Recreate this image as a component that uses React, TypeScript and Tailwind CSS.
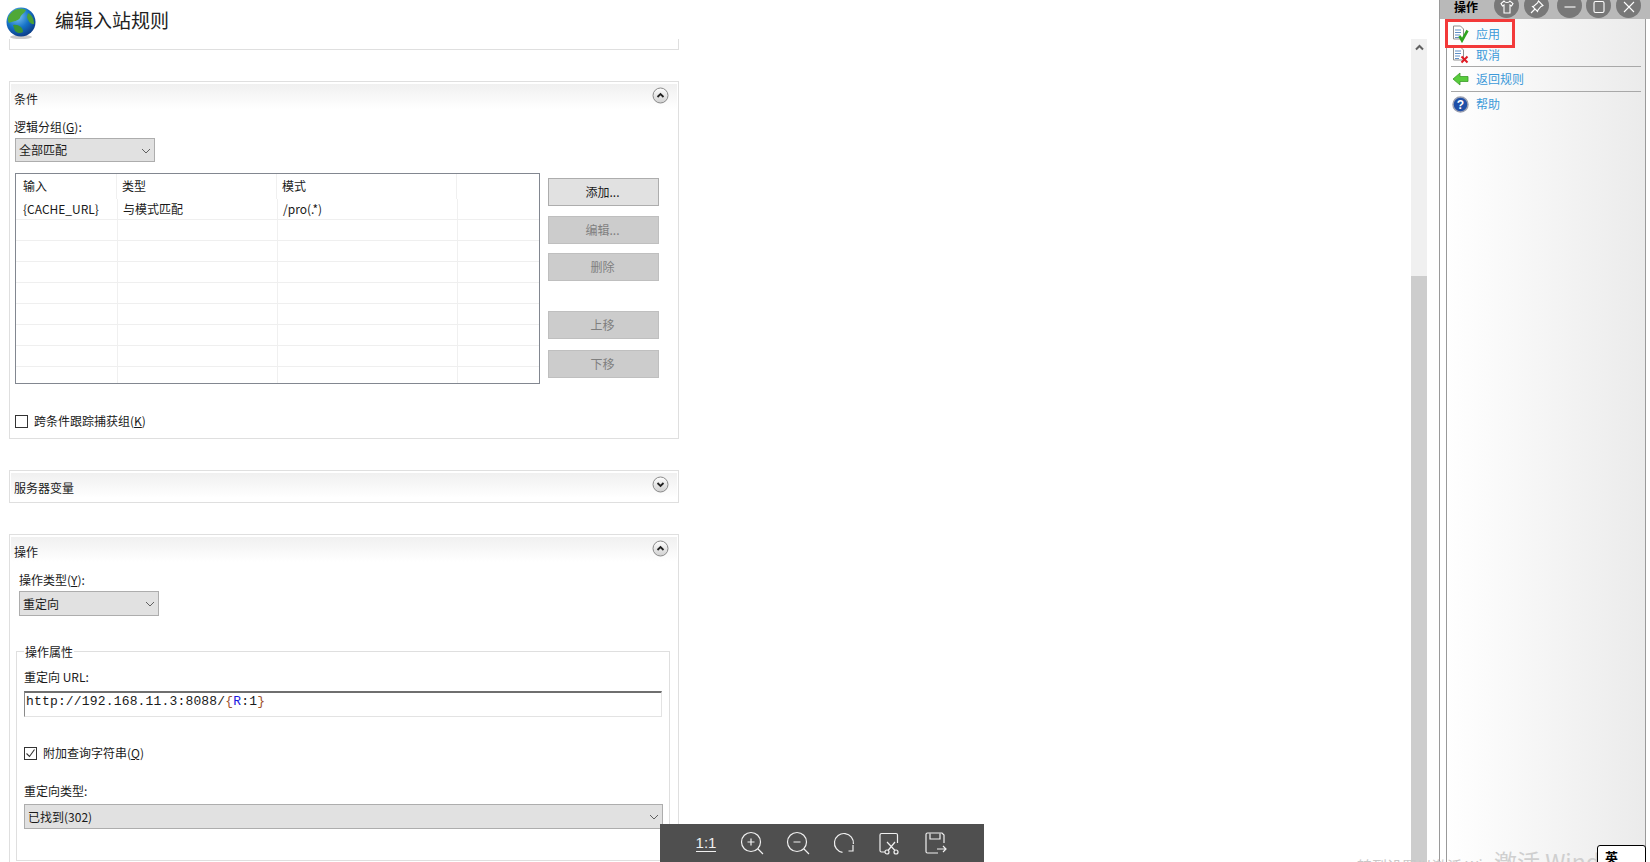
import React from "react";

const Chevron = ({ up }: { up?: boolean }) => (
  <svg width="17" height="17" viewBox="0 0 17 17" className="block">
    <defs>
      <linearGradient id={up ? "cu" : "cd"} x1="0" y1="0" x2="0" y2="1">
        <stop offset="0" stopColor="#ffffff" />
        <stop offset="1" stopColor="#d0d0d0" />
      </linearGradient>
    </defs>
    <circle cx="8.5" cy="8.5" r="7.5" fill={`url(#${up ? "cu" : "cd"})`} stroke="#8a8a8a" />
    <path d={up ? "M5.5 10 L8.5 7 L11.5 10" : "M5.5 7 L8.5 10 L11.5 7"} fill="none" stroke="#222" strokeWidth="1.8" />
  </svg>
);

const SelectBox = ({ text, className }: { text: string; className: string }) => (
  <div className={`flex items-center justify-between border border-[#adadad] bg-[#e1e1e1] pl-[3px] pr-[3px] text-[12px] leading-4 ${className}`}>
    <span>{text}</span>
    <svg width="10" height="6" viewBox="0 0 10 6" className="mt-[1px]"><path d="M1 1 L5 5 L9 1" fill="none" stroke="#606060" strokeWidth="1" /></svg>
  </div>
);

const Btn = ({ text, active, className = "" }: { text: string; active?: boolean; className?: string }) => (
  <div className={`flex h-[28px] w-[111px] items-center justify-center border pr-[2px] text-[12px] leading-4 ${active ? "border-[#adadad] bg-[#e1e1e1] text-[#1a1a1a]" : "border-[#bfbfbf] bg-[#cccccc] text-[#7f7f7f]"} ${className}`}>
    {text}
  </div>
);

const CardHead = ({ title, up }: { title: string; up?: boolean }) => (
  <div className="mx-[1px] mt-[2px] flex h-[25px] items-start justify-between bg-gradient-to-b from-[#f0f0f0] to-white pl-[3px] pr-[8px]">
    <span className="mt-[7px] text-[12px] leading-4">{title}</span>
    <span className="mt-[3px]"><Chevron up={up} /></span>
  </div>
);

const rows = [0, 1, 2, 3, 4, 5, 6, 7, 8];

const Cell = ({ w, text }: { w: string; text?: string }) => (
  <div className={`${w} border-r border-[#f0f0f0] text-[12px] leading-4`}>{text}</div>
);

const DocIcon = ({ kind }: { kind: "ok" | "no" }) => (
  <svg width="18" height="18" viewBox="0 0 18 18">
    <path d="M1.5 1 H8.5 L11.5 4 V14 H1.5 Z" fill="#fff" stroke="#8f8f8f" />
    <path d="M3 5 H9 M3 7.5 H9 M3 10 H8 M3 12.5 H7" stroke="#5f8fc7" strokeWidth="1" />
    {kind === "ok" ? (
      <path d="M7.5 11 L10 15.5 L15.5 5.5" fill="none" stroke="#2fa51f" strokeWidth="2.6" />
    ) : (
      <path d="M9.5 10.5 L15.5 16.5 M15.5 10.5 L9.5 16.5" stroke="#e01b24" strokeWidth="2" />
    )}
  </svg>
);

const Action = ({ icon, text, h }: { icon: React.ReactNode; text: string; h: string }) => (
  <div className={`flex items-center pl-[5px] ${h}`}>
    <span className="flex w-[24px] shrink-0 items-center">{icon}</span>
    <span className="text-[12px] leading-4 text-[#3c9ad9]">{text}</span>
  </div>
);

const Circle = ({ children, className }: { children: React.ReactNode; className: string }) => (
  <div className={`-mt-[7px] flex h-[25px] w-[25px] shrink-0 items-center justify-center rounded-full bg-[#787878] ${className}`}>
    <svg width="16" height="16" viewBox="0 0 16 16" fill="none" stroke="#fff" strokeWidth="1.1" className="mt-[2px]">{children}</svg>
  </div>
);

const Slot = ({ children }: { children: React.ReactNode }) => (
  <div className="flex w-[46px] shrink-0 items-center justify-center">{children}</div>
);

export default function App() {
  return (
    <div className="relative flex h-[862px] w-[1650px] overflow-hidden bg-white text-[#1a1a1a] [font-family:'Noto_Sans_CJK_SC','Liberation_Sans',sans-serif]">
      {/* main column */}
      <div className="w-[1411px] shrink-0">
        <div className="flex h-[39px] items-start">
          <svg width="32" height="33" viewBox="0 0 32 33" className="ml-[5px] mt-[7px] shrink-0">
            <defs>
              <radialGradient id="g1" cx="0.38" cy="0.3" r="0.8">
                <stop offset="0" stopColor="#7fc6f0" />
                <stop offset="0.5" stopColor="#1673c8" />
                <stop offset="1" stopColor="#082f78" />
              </radialGradient>
            </defs>
            <ellipse cx="16" cy="30" rx="11" ry="2" fill="#c9c9c9" />
            <circle cx="16" cy="15" r="14.5" fill="url(#g1)" />
            <path d="M6 6 C10 1 17 1 21 3 C19 7 16 7 15 11 C13 14 9 14 4 16 C2 12 3 9 6 6Z" fill="#4fa838" />
            <path d="M8 18 C13 17 18 20 18 25 C15 27 12 26 10 24 Z" fill="#3a9335" />
            <path d="M23 6 C27 8 29 12 29 17 C26 18 23 14 22 10 Z" fill="#4ba035" />
          </svg>
          <span className="ml-[18px] mt-[7px] text-[19px] leading-[26px] text-[#222]">编辑入站规则</span>
        </div>

        <div className="ml-[9px] w-[670px]">
          <div className="h-[11px] border-x border-b border-[#dfdfdf]" />

          {/* conditions */}
          <div className="mt-[31px] h-[358px] border border-[#dfdfdf]">
            <CardHead title="条件" up />
            <div className="pl-[4px]">
              <div className="mt-[10px] text-[12px] leading-4">逻辑分组(<u>G</u>):</div>
              <SelectBox text="全部匹配" className="ml-[1px] mt-[3px] h-[24px] w-[140px]" />
              <div className="ml-[1px] mt-[11px] flex items-start">
                <div className="h-[211px] w-[525px] border border-[#828790]">
                  <div className="flex h-[25px]">
                    <Cell w="w-[101px] pl-[7px] pt-[4px]" text="输入" />
                    <Cell w="w-[160px] pl-[5px] pt-[4px]" text="类型" />
                    <Cell w="w-[180px] pl-[5px] pt-[4px]" text="模式" />
                  </div>
                  {rows.map((r) => (
                    <div key={r} className={`flex ${r < 8 ? "h-[21px] border-b border-[#efefef]" : "h-[16px]"}`}>
                      <Cell w="w-[102px] pl-[7px] pt-[2px]" text={r === 0 ? "{CACHE_URL}" : ""} />
                      <Cell w="w-[160px] pl-[5px] pt-[2px]" text={r === 0 ? "与模式匹配" : ""} />
                      <Cell w="w-[180px] pl-[5px] pt-[2px]" text={r === 0 ? "/pro(.*)" : ""} />
                    </div>
                  ))}
                </div>
                <div className="ml-[8px] mt-[5px]">
                  <Btn text="添加..." active />
                  <Btn text="编辑..." className="mt-[10px]" />
                  <Btn text="删除" className="mt-[9px]" />
                  <Btn text="上移" className="mt-[30px]" />
                  <Btn text="下移" className="mt-[11px]" />
                </div>
              </div>
              <div className="ml-[1px] mt-[29px] flex items-center">
                <span className="h-[13px] w-[13px] border border-[#333]" />
                <span className="ml-[6px] text-[12px] leading-4">跨条件跟踪捕获组(<u>K</u>)</span>
              </div>
            </div>
          </div>

          {/* server variables */}
          <div className="mt-[31px] h-[33px] border border-[#dfdfdf]">
            <CardHead title="服务器变量" />
          </div>

          {/* action */}
          <div className="mt-[31px] border border-[#dfdfdf] pb-[20px]">
            <CardHead title="操作" up />
            <div className="pl-[9px]">
              <div className="mt-[10px] text-[12px] leading-4">操作类型(<u>Y</u>):</div>
              <SelectBox text="重定向" className="mt-[3px] h-[25px] w-[140px]" />
            </div>
            <div className="relative ml-[6px] mt-[35px] w-[654px] border border-[#dfdfdf] pb-[31px] pl-[7px] pt-[17px]">
              <span className="absolute -top-[8px] left-[7px] bg-white px-[1px] text-[12px] leading-4">操作属性</span>
              <div className="text-[12px] leading-4">重定向 URL:</div>
              <div className="mt-[6px] h-[26px] w-[638px] border-x border-b border-t-2 border-b-[#e3e3e3] border-l-[#8a8a8a] border-r-[#e3e3e3] border-t-[#6f6f6f] pl-[1px] pt-[1px] text-[13px] leading-[15px] tracking-[0.17px] [font-family:'Liberation_Mono',monospace]">
                http://192.168.11.3:8088/<span className="text-[#a0522d]">{"{"}</span><span className="text-[#1a1ae0]">R</span>:1<span className="text-[#a0522d]">{"}"}</span>
              </div>
              <div className="mt-[28px] flex items-center">
                <span className="flex h-[13px] w-[13px] items-center justify-center border border-[#333]">
                  <svg width="11" height="11" viewBox="0 0 11 11"><path d="M1.5 5.5 L4.5 8.5 L9.5 1.5" fill="none" stroke="#333" strokeWidth="1.1" /></svg>
                </span>
                <span className="ml-[6px] text-[12px] leading-4">附加查询字符串(<u>Q</u>)</span>
              </div>
              <div className="mt-[22px] text-[12px] leading-4">重定向类型:</div>
              <SelectBox text="已找到(302)" className="mt-[5px] h-[25px] w-[639px]" />
            </div>
          </div>
        </div>
      </div>

      {/* scrollbar */}
      <div className="mt-[39px] flex h-[823px] w-[16px] shrink-0 flex-col bg-[#f0f0f0]">
        <div className="flex h-[17px] items-center justify-center">
          <svg width="9" height="7" viewBox="0 0 9 7"><path d="M1 5.5 L4.5 2 L8 5.5" fill="none" stroke="#606060" strokeWidth="2" /></svg>
        </div>
        <div className="mt-[220px] flex-1 bg-[#cdcdcd]" />
      </div>

      {/* actions panel */}
      <div className="ml-[12px] flex w-[211px] shrink-0 flex-col border-l border-[#9a9a9a]">
        <div className="flex h-[19px] shrink-0 items-start overflow-hidden bg-[#b9b9b9]">
          <span className="ml-[14px] shrink-0 text-[12px] font-bold leading-[14px] text-black">操作</span>
          <Circle className="ml-[16px]">
            <path d="M5 2 L2 4.5 L3.5 7 L5 6 V14 H11 V6 L12.5 7 L14 4.5 L11 2 C10 4 6 4 5 2Z" />
          </Circle>
          <Circle className="ml-[5px]">
            <path d="M9.5 2 L14 6.5 L12 7.5 L9 11 L8.5 12.5 L3.5 7.5 L5 7 L8.5 4 Z M6 10 L2 14" />
          </Circle>
          <Circle className="ml-[8px]"><path d="M2.5 8 H13.5" /></Circle>
          <Circle className="ml-[4px]"><rect x="3" y="2.5" width="10" height="11" rx="1.5" /></Circle>
          <Circle className="ml-[5px]"><path d="M3 3 L13 13 M13 3 L3 13" /></Circle>
        </div>
        <div className="ml-[6px] mr-[4px] flex-1 border-x border-[#9a9a9a] bg-gradient-to-r from-white to-[#ebebeb] pt-[4px]">
          <Action h="h-[21px]" text="应用" icon={<DocIcon kind="ok" />} />
          <Action h="h-[21px]" text="取消" icon={<DocIcon kind="no" />} />
          <div className="ml-[4px] mr-[4px] mt-[1px] h-px bg-[#a8a8a8]" />
          <Action
            h="h-[24px]"
            text="返回规则"
            icon={
              <svg width="17" height="14" viewBox="0 0 17 14">
                <path d="M1 7 L8 1 V4.5 H16 V9.5 H8 V13 Z" fill="#58cc3c" stroke="#3a9a28" strokeWidth="0.8" />
              </svg>
            }
          />
          <div className="ml-[4px] mr-[4px] h-px bg-[#a8a8a8]" />
          <Action
            h="h-[24px]"
            text="帮助"
            icon={
              <svg width="17" height="17" viewBox="0 0 17 17">
                <circle cx="8.5" cy="8.5" r="7.5" fill="#1f4fa8" stroke="#9a9fb0" strokeWidth="1.5" />
                <text x="8.5" y="13" textAnchor="middle" fontSize="12" fontWeight="700" fill="#fff" fontFamily="Liberation Sans">?</text>
              </svg>
            }
          />
        </div>
      </div>

      {/* overlays */}
      <div className="absolute left-[1445px] top-[19px] h-[29px] w-[70px] border-[3px] border-[#f33a3a]" />

      <span className="absolute left-[1357px] top-[856px] whitespace-nowrap text-[15px] leading-5 text-[#c8c8c8]">转到设置以激活 Windows</span>
      <span className="absolute left-[1494px] top-[847px] whitespace-nowrap text-[23px] leading-7 text-[#cfcfcf]">激活 Windows。</span>

      <div className="absolute left-[1597px] top-[845px] h-[30px] w-[49px] rounded-[3px] border border-black bg-white pl-[7px] pt-[1px] text-[13px] font-bold leading-5 text-black">英</div>

      <div className="absolute left-[660px] top-[824px] flex h-[38px] w-[324px] items-center bg-[#4f4f4f] pl-[23px] text-[#f0f0f0]">
        <Slot>
          <span className="border-b border-[#f0f0f0] text-[15px] font-light leading-[17px] [font-family:'Liberation_Sans',sans-serif]">1:1</span>
        </Slot>
        <Slot>
          <svg width="26" height="26" viewBox="0 0 26 26" fill="none" stroke="#f0f0f0" strokeWidth="1.2">
            <circle cx="12" cy="12" r="9.5" /><path d="M19 19 L24 24 M8.5 12 H15.5 M12 8.5 V15.5" />
          </svg>
        </Slot>
        <Slot>
          <svg width="26" height="26" viewBox="0 0 26 26" fill="none" stroke="#f0f0f0" strokeWidth="1.2">
            <circle cx="12" cy="12" r="9.5" /><path d="M19 19 L24 24 M8.5 12 H15.5" />
          </svg>
        </Slot>
        <Slot>
          <svg width="24" height="24" viewBox="0 0 24 24" fill="none" stroke="#f0f0f0" strokeWidth="1.2">
            <path d="M10.5 21.4 A9.5 9.5 0 1 1 21.4 13" /><path d="M21 14 V20 H16.5" />
          </svg>
        </Slot>
        <Slot>
          <svg width="24" height="24" viewBox="0 0 24 24" fill="none" stroke="#f0f0f0" strokeWidth="1.2">
            <path d="M7 21 H3.5 A1.5 1.5 0 0 1 2 19.5 V4 A1.5 1.5 0 0 1 3.5 2.5 H18 A1.5 1.5 0 0 1 19.5 4 V12" />
            <path d="M9 11 L17 19.5 M17 11 L10 19.5" />
            <circle cx="9" cy="21" r="2" /><circle cx="18" cy="21" r="2" />
          </svg>
        </Slot>
        <Slot>
          <svg width="24" height="24" viewBox="0 0 24 24" fill="none" stroke="#f0f0f0" strokeWidth="1.2">
            <path d="M14 22 H3.5 A1.5 1.5 0 0 1 2 20.5 V3.5 A1.5 1.5 0 0 1 3.5 2 H18 L20 4 V12" />
            <path d="M6 2.5 V8 H16 V2.5 M13 18 H22 M19 15 L22 18 L19 21" />
          </svg>
        </Slot>
      </div>
    </div>
  );
}
